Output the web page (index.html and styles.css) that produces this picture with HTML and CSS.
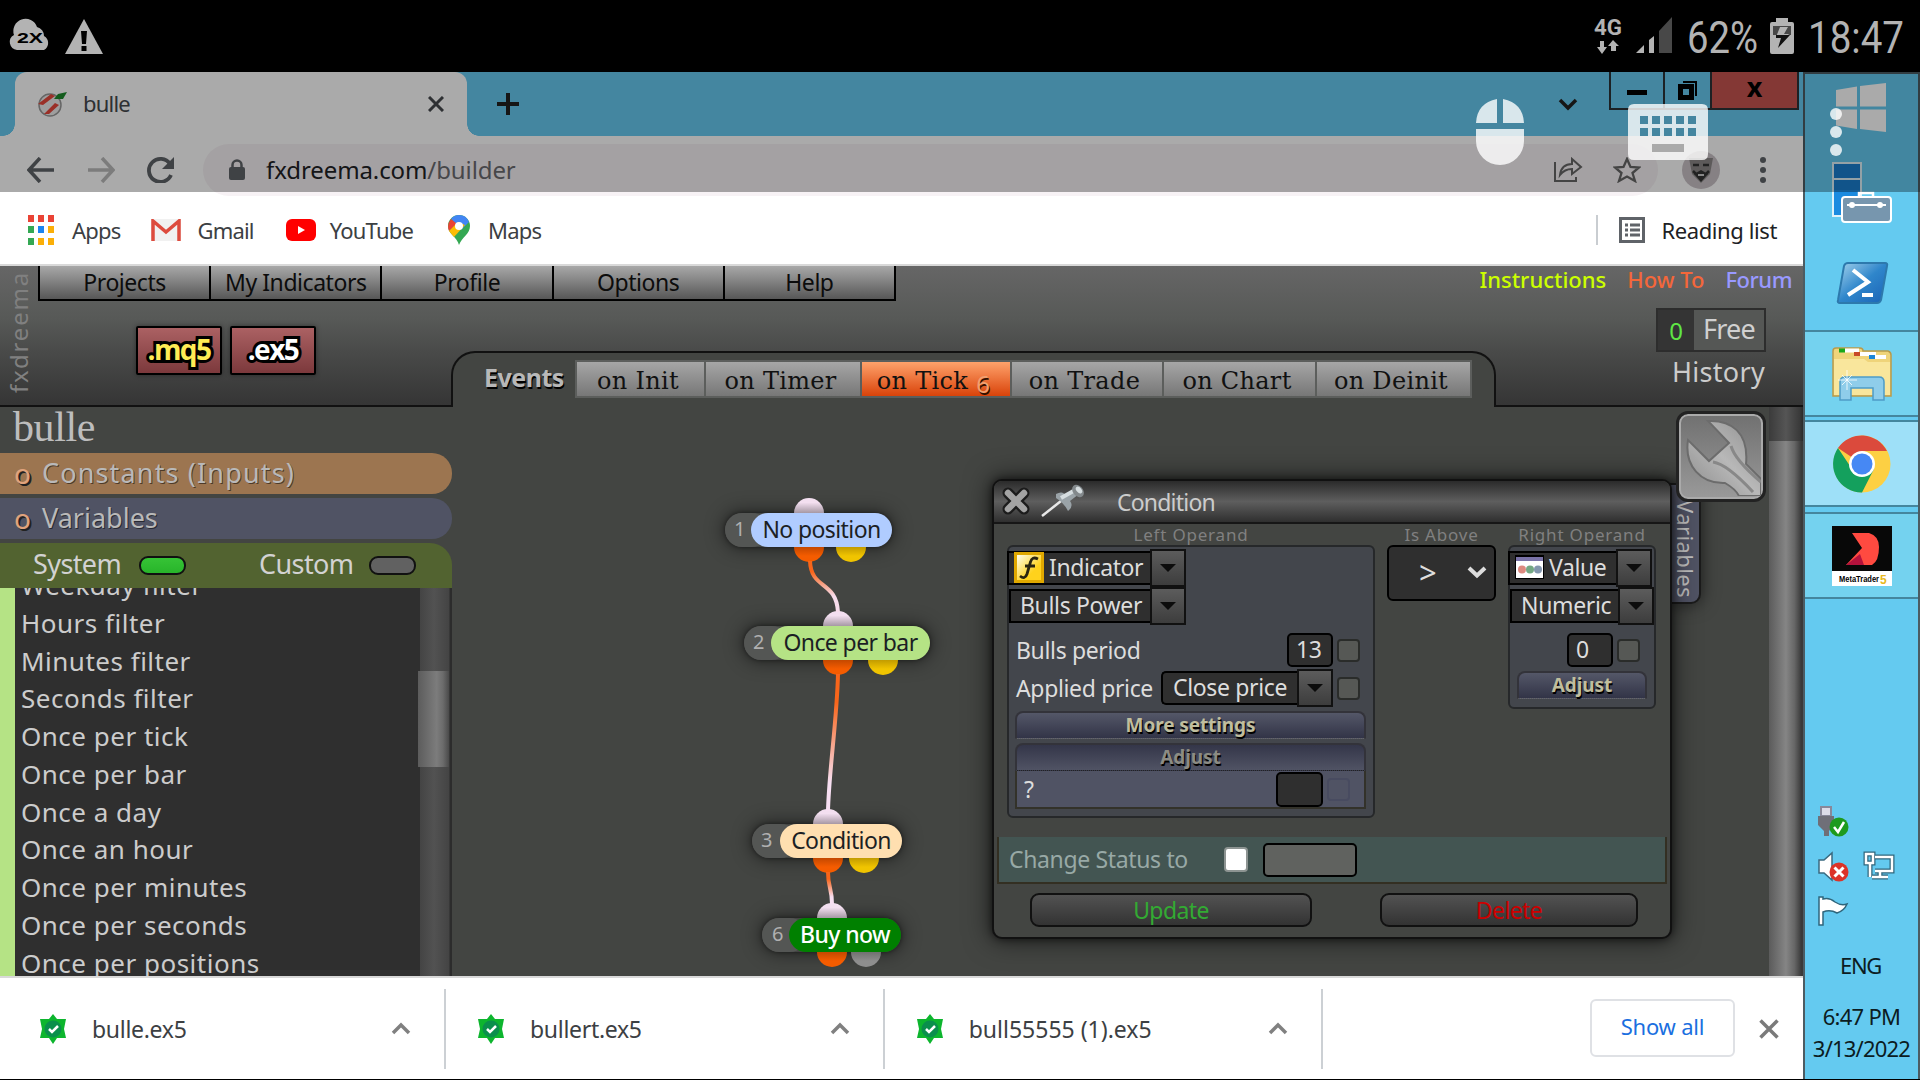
FILE: index.html
```html
<!DOCTYPE html>
<html lang="en">
<head>
    <meta charset="UTF-8">
    <meta name="viewport" content="width=device-width, initial-scale=1.0">
    <title>bulle</title>
    <link rel="stylesheet" href="styles.css">
</head>
<body>
    <!-- Phone status bar -->
    <div class="statusbar">
        <svg class="status-left" width="110" height="72" viewBox="0 0 110 72">
            <path d="M17 50 a8 8 0 0 1 -3 -15 a12 12 0 0 1 23 -8 a9 9 0 0 1 7 9 a8 8 0 0 1 0 14 z" fill="#b3b3b3"/>
            <text x="17" y="43" class="cloud-text" textLength="26" lengthAdjust="spacingAndGlyphs">2X</text>
            <path d="M84 19 L103 54 H65 z" fill="#b3b3b3"/>
            <path d="M81 31 h6 l-1 13 h-4 z M81.500 46 h5 v5 h-5 z" fill="#000"/>
        </svg>
        <svg class="status-right" width="340" height="72" viewBox="1580 0 340 72">
            <text x="1594" y="35" class="net-text" textLength="28" lengthAdjust="spacingAndGlyphs">4G</text>
            <path d="M1600 41 h4 v6 h3 l-5 7 l-5 -7 h3 z M1611 51 v-5 h-3 l5 -6 l6 6 h-3 v5 z" fill="#b3b3b3"/>
            <path d="M1636 53 l8 -8 v8 z M1649 53 v-13 l5 -4 v17 z" fill="#b3b3b3"/>
            <path d="M1659 53 V31 L1672 17 V53 z" fill="#484848"/>
            <text x="1687" y="53" class="big-text" textLength="71" lengthAdjust="spacingAndGlyphs">62%</text>
            <path d="M1772 22 h4 v-4 h12 v4 h4 q2 0 2 2 v28 q0 2 -2 2 h-20 q-2 0 -2 -2 v-28 q0 -2 2 -2 z" fill="#b3b3b3"/>
            <path d="M1773 26 h18 v9 h-18 z" fill="#484848"/>
            <path d="M1780 27 l-4 10 h5 l-4 10 l12 -13 h-5 l4 -7 z" fill="#b3b3b3"/>
            <path d="M1776 35 l0 3 h5 l-3 10 l12 -13 z" fill="#111"/>
            <text x="1808" y="53" class="big-text" textLength="96" lengthAdjust="spacingAndGlyphs">18:47</text>
        </svg>
    </div>

    <div class="remote">
        <div class="browser">
            <div class="tabstrip">
                <div class="tab">
                    <svg width="32" height="28" viewBox="0 0 32 28">
                        <circle cx="13" cy="15" r="11" fill="#eee" stroke="#999" stroke-width="1.500"/>
                        <path d="M1 14 L14 4 l4 2 L6 15 z M7 24 L18 13 l4 2 L12 24 z" fill="#e8483c"/>
                        <path d="M17 9 L21 4 L30 2 L26 9 z" fill="#1d8a2c"/>
                    </svg>
                    <span class="tab-title">bulle</span>
                    <svg width="16" height="16" viewBox="0 0 16 16"><path d="M1 1 L15 15 M15 1 L1 15" stroke="#45494d" stroke-width="3"/></svg>
                </div>
                <svg class="new-tab" width="24" height="24" viewBox="0 0 24 24"><path d="M12 1 V23 M1 12 H23" stroke="#222" stroke-width="4"/></svg>
                <svg class="tab-search" width="20" height="13" viewBox="0 0 20 13"><path d="M2 2 L10 10 L18 2" fill="none" stroke="#222" stroke-width="3.500"/></svg>
                <div class="window-buttons">
                    <span class="wb wb-min"><svg width="20" height="6"><rect width="20" height="5" fill="#000"/></svg></span>
                    <span class="wb wb-max"><svg width="20" height="19" viewBox="0 0 20 19"><path d="M2.500 5.500 h11 v11 h-11 z" fill="none" stroke="#000" stroke-width="5"/><path d="M5 1 H18 V15" fill="none" stroke="#000" stroke-width="2"/></svg></span>
                    <span class="wb wb-close">x</span>
                </div>
            </div>

            <div class="toolbar">
                <svg width="28" height="26" viewBox="0 0 28 26"><path d="M27 13 H3 M13 1 L2 13 L13 25" fill="none" stroke="#5f6368" stroke-width="3.500"/></svg>
                <svg width="28" height="26" viewBox="0 0 28 26"><path d="M1 13 H25 M15 1 L26 13 L15 25" fill="none" stroke="#bbb" stroke-width="3.500"/></svg>
                <svg width="28" height="26" viewBox="0 0 28 26"><path d="M24 18 A11.500 11.500 0 1 1 23 7" fill="none" stroke="#5f6368" stroke-width="3.800"/><path d="M27 0 V12 H15 z" fill="#5f6368"/></svg>
                <div class="url-pill">
                    <svg width="16" height="22" viewBox="0 0 16 22"><rect y="8" width="16" height="13" rx="2" fill="#5f6368"/><path d="M3.500 9 V6 a4.500 4.500 0 0 1 9 0 V9" fill="none" stroke="#5f6368" stroke-width="2.500"/></svg>
                    <span class="url">fxdreema.com<span class="path">/builder</span></span>
                    <svg class="share" width="30" height="26" viewBox="0 0 30 26"><path d="M2 5 V24 H23 V20" fill="none" stroke="#666" stroke-width="2"/><path d="M7 18 C8 10 12 7 19 7 V2 L28 10 L19 17 V12 C13 12 10 14 7 18 z" fill="none" stroke="#666" stroke-width="2"/></svg>
                    <svg width="28" height="26" viewBox="0 0 28 26"><path d="M14 2 L17.500 10 L26 10.500 L19.500 16 L22 24 L14 19.500 L6 24 L8.500 16 L2 10.500 L10.500 10 z" fill="none" stroke="#666" stroke-width="2.300"/></svg>
                </div>
                <svg class="avatar" width="40" height="40" viewBox="0 0 40 40">
                    <circle cx="20" cy="20" r="19" fill="#c9c2c7"/>
                    <path d="M8 8 H32 L29 24 L20 33 L11 24 z" fill="#8c8888"/>
                    <path d="M12 15 h6 M22 15 h6 M12 21 l3 3 M28 21 l-3 3" stroke="#333" stroke-width="2.500"/>
                    <path d="M13 24 L20 20 L27 24 L20 32 z" fill="#333"/>
                    <path d="M17 25 h6" stroke="#ccc" stroke-width="2"/>
                </svg>
                <svg class="kebab" width="8" height="26" viewBox="0 0 8 26"><g fill="#5f6368"><circle cx="4" cy="3" r="3"/><circle cx="4" cy="13" r="3"/><circle cx="4" cy="23" r="3"/></g></svg>
            </div>

            <div class="bookmarks">
                <a class="bookmark bm-apps">
                    <svg width="26" height="30" viewBox="0 0 26 30">
                        <path d="M0 0h6v7H0z M10 0h6v7h-6z M20 0h6v7h-6z" fill="#ea4335"/>
                        <path d="M0 11h6v7H0z M0 23h6v7H0z" fill="#34a853"/>
                        <path d="M10 11h6v7h-6z" fill="#1a84f0"/>
                        <path d="M20 11h6v7h-6z M10 23h6v7h-6z M20 23h6v7h-6z" fill="#fbaf08"/>
                    </svg>Apps</a>
                <a class="bookmark bm-gmail">
                    <svg width="30" height="22" viewBox="0 0 30 22"><rect width="30" height="22" fill="#f1f1f1"/><path d="M2 22 V2 L15 13 L28 2 V22" fill="none" stroke="#dd4b3e" stroke-width="3.500"/></svg>Gmail</a>
                <a class="bookmark bm-youtube">
                    <svg width="30" height="22" viewBox="0 0 30 22"><rect width="30" height="22" rx="6" fill="#f00"/><path d="M12 7 L19 11 L12 15 z" fill="#fff"/></svg>YouTube</a>
                <a class="bookmark bm-maps">
                    <svg width="22" height="30" viewBox="0 0 22 30">
                        <path d="M11 0 A11 11 0 0 1 22 11 C22 19 14 22 11 30 C9 22 0 19 0 11 A11 11 0 0 1 11 0 z" fill="#34a853"/>
                        <path d="M11 0 A11 11 0 0 1 21 7 L13 15 L3 4 A11 11 0 0 1 11 0 z" fill="#4285f4"/>
                        <path d="M3 4 L9 9 L1 16 A12 12 0 0 1 3 4 z" fill="#ea4335"/>
                        <path d="M1 16 L10 7 L17 10 L6 22 z" fill="#fbbc04"/>
                        <circle cx="11" cy="11" r="4" fill="#fff"/>
                    </svg>Maps</a>
                <span class="bm-divider"></span>
                <a class="bookmark bm-reading">
                    <svg width="26" height="26" viewBox="0 0 26 26"><rect x="1.500" y="1.500" width="23" height="23" fill="none" stroke="#5f6368" stroke-width="3"/><path d="M6 8 h3 M11 8 h10 M6 13 h3 M11 13 h10 M6 18 h3 M11 18 h10" stroke="#5f6368" stroke-width="3"/></svg>Reading list</a>
            </div>

            <!-- fxDreema builder -->
            <div class="app">
                <header class="app-header">
                    <div class="brand"><span>fxdreema</span></div>
                    <nav class="menu">
                        <a>Projects</a><a>My Indicators</a><a>Profile</a><a>Options</a><a>Help</a>
                    </nav>
                    <div class="compile">
                        <button class="compile-btn mq">.mq5</button>
                        <button class="compile-btn">.ex5</button>
                    </div>
                    <div class="events">
                        <span class="events-title">Events</span>
                        <div class="event-tabs">
                            <span class="ev ev-init">on Init</span>
                            <span class="ev ev-timer">on Timer</span>
                            <span class="ev ev-tick">on Tick<b class="count">6</b></span>
                            <span class="ev ev-trade">on Trade</span>
                            <span class="ev ev-chart">on Chart</span>
                            <span class="ev ev-deinit">on Deinit</span>
                        </div>
                    </div>
                    <div class="account">
                        <div class="links"><a class="l-inst">Instructions</a><a class="l-how">How To</a><a class="l-forum">Forum</a></div>
                        <div class="plan"><span class="plan-num">0</span><span class="plan-name">Free</span></div>
                        <div class="history">History</div>
                    </div>
                </header>

                <div class="app-body">
                    <aside class="sidebar">
                        <div class="project">bulle</div>
                        <div class="bar bar-const"><b>o</b><span>Constants (Inputs)</span></div>
                        <div class="bar bar-vars"><b>o</b><span>Variables</span></div>
                        <div class="switches">
                            <span class="sw-label">System</span><i class="switch on"></i>
                            <span class="sw-label sw-custom">Custom</span><i class="switch"></i>
                        </div>
                        <div class="list">
                            <ul>
                                <li>Weekday filter</li>
                                <li>Hours filter</li>
                                <li>Minutes filter</li>
                                <li>Seconds filter</li>
                                <li>Once per tick</li>
                                <li>Once per bar</li>
                                <li>Once a day</li>
                                <li>Once an hour</li>
                                <li>Once per minutes</li>
                                <li>Once per seconds</li>
                                <li>Once per positions</li>
                            </ul>
                            <div class="list-scroll"><div class="list-thumb"></div></div>
                        </div>
                    </aside>

                    <main class="canvas">
                        <div class="node node-1"><i class="nub in"></i><i class="nub out"></i><i class="nub out2"></i><span class="num">1</span><span class="name">No position</span></div>
                        <div class="node node-2"><i class="nub in"></i><i class="nub out"></i><i class="nub out2"></i><span class="num">2</span><span class="name">Once per bar</span></div>
                        <div class="node node-3"><i class="nub in"></i><i class="nub out"></i><i class="nub out2"></i><span class="num">3</span><span class="name">Condition</span></div>
                        <div class="node node-6"><i class="nub in"></i><i class="nub out"></i><i class="nub out2"></i><span class="num">6</span><span class="name">Buy now</span></div>
                        <svg class="wires" width="541" height="569" viewBox="452 407 541 569">
                            <defs>
                                <linearGradient id="w1" gradientUnits="userSpaceOnUse" x1="0" y1="562" x2="0" y2="611"><stop offset=".2" stop-color="#f8651a"/><stop offset=".7" stop-color="#f7dcec"/></linearGradient>
                                <linearGradient id="w2" gradientUnits="userSpaceOnUse" x1="0" y1="675" x2="0" y2="810"><stop offset=".2" stop-color="#f8651a"/><stop offset=".8" stop-color="#f7dff2"/></linearGradient>
                                <linearGradient id="w3" gradientUnits="userSpaceOnUse" x1="0" y1="873" x2="0" y2="903"><stop offset=".2" stop-color="#f8651a"/><stop offset=".8" stop-color="#f7dff2"/></linearGradient>
                            </defs>
                            <g fill="none" stroke-width="4">
                                <path d="M810 561 C811 590 836 580 838 612" stroke="url(#w1)"/>
                                <path d="M838 674 C837 720 829 770 828 811" stroke="url(#w2)"/>
                                <path d="M828 872 C828 888 832 888 832 904" stroke="url(#w3)"/>
                            </g>
                        </svg>

                        <div class="side-tab"><span>Variables</span></div>

                        <section class="dialog">
                            <div class="titlebar">
                                <svg width="30" height="30" viewBox="0 0 30 30"><path d="M7 7 L23 23 M23 7 L7 23" stroke="#1c1c1c" stroke-width="11" stroke-linecap="round"/><path d="M7 7 L23 23 M23 7 L7 23" stroke="#a3a3a3" stroke-width="6.500" stroke-linecap="round"/></svg>
                                <svg class="pin" width="44" height="34" viewBox="0 0 44 34">
                                    <path d="M1 32 L20 17" stroke="#e8e8e8" stroke-width="2.500"/>
                                    <path d="M15 10 Q22 6 25 12 L34 6 L38 10 L29 17 Q33 22 27 27 Q23 19 15 14 z" fill="#9aa3a8"/>
                                    <path d="M20 14 L36 5" stroke="#d6dde0" stroke-width="4"/>
                                    <ellipse cx="37" cy="7" rx="5" ry="7" transform="rotate(-40 37 7)" fill="#83898c"/>
                                    <ellipse cx="38" cy="6" rx="2.500" ry="4" transform="rotate(-40 38 6)" fill="#d6dde0"/>
                                </svg>
                                <span>Condition</span>
                            </div>
                            <div class="operands">
                                <h4>Left Operand</h4><h4>Is Above</h4><h4>Right Operand</h4>
                                <div class="panel left">
                                    <div class="pick">
                                        <span class="value with-icon"><svg width="30" height="31" viewBox="0 0 30 31"><defs><linearGradient id="fy" x1="0" y1="0" x2="1" y2="1"><stop offset=".1" stop-color="#fffbe0"/><stop offset=".65" stop-color="#ffd21c"/></linearGradient></defs><rect x="1.500" y="1.500" width="27" height="28" fill="url(#fy)" stroke="#e0a800" stroke-width="3"/><path d="M24 7 Q18 4 16.500 10 L13 22 Q11 28 6 24 M11 14 H21" fill="none" stroke="#2a2410" stroke-width="2.800"/></svg>Indicator</span><i class="arrow"></i>
                                    </div>
                                    <div class="pick second"><span class="value">Bulls Power</span><i class="arrow"></i></div>
                                    <div class="field first"><label>Bulls period</label><span class="input">13</span><i class="check"></i></div>
                                    <div class="field"><label>Applied price</label><span class="input price">Close price</span><i class="arrow"></i><i class="check"></i></div>
                                    <div class="strip more">More settings</div>
                                    <div class="strip adjust-open">Adjust</div>
                                    <div class="adjust-body"><label>?</label><span class="input"></span><i class="check faint"></i></div>
                                </div>
                                <div class="operator"><span>&gt;</span><svg width="20" height="13" viewBox="0 0 20 13"><path d="M2 2 L10 9.500 L18 2" fill="none" stroke="#ddd" stroke-width="4"/></svg></div>
                                <div class="panel right">
                                    <div class="pick">
                                        <span class="value with-icon"><svg width="29" height="24" viewBox="0 0 29 24"><rect width="29" height="24" fill="#000"/><rect x="1" y="2" width="27" height="21" fill="#fff"/><rect x="1" y="2" width="27" height="4" fill="#7a73a8"/><circle cx="7" cy="14.500" r="4" fill="#dd8a80"/><circle cx="15" cy="14.500" r="4" fill="#74a884"/><circle cx="23" cy="14.500" r="4" fill="#8397ae"/></svg>Value</span><i class="arrow"></i>
                                    </div>
                                    <div class="pick second"><span class="value">Numeric</span><i class="arrow"></i></div>
                                    <div class="field first"><label></label><span class="input">0</span><i class="check"></i></div>
                                    <div class="strip">Adjust</div>
                                </div>
                            </div>
                            <div class="change-status"><label>Change Status to</label><i class="white-check"></i><i class="status-input"></i></div>
                            <div class="actions"><button class="update">Update</button><button class="delete">Delete</button></div>
                        </section>

                        <div class="wrench">
                            <svg width="82" height="82" viewBox="0 0 82 82">
                                <defs><linearGradient id="steel" x1="0" y1="1" x2="1" y2="0"><stop offset="0" stop-color="#8a8a8a"/><stop offset=".5" stop-color="#b8b8b8"/><stop offset="1" stop-color="#8e8e8e"/></linearGradient></defs>
                                <path d="M29 7 C52 6 70 18 67 50 L82 65 V82 H60 C57 76 53 73 46 69 C22 70 5 52 9 26 L30 47 L50 29 z" fill="url(#steel)" stroke="#6c6c6c" stroke-width="2"/>
                                <path d="M34 48 Q48 50 74 78 M52 32 Q56 46 82 68" fill="none" stroke="#888" stroke-width="3"/>
                            </svg>
                        </div>
                        <div class="page-scroll"><div class="page-thumb"></div></div>
                    </main>
                </div>
            </div>

            <div class="downloads">
                <div class="download">
                    <svg width="28" height="30" viewBox="0 0 28 30"><path d="M14 0 L18 5 H27 L25 15 L27 24 H18 L14 30 L10 24 H1 L3 15 L1 5 H10 z" fill="#0db52e"/><circle cx="14" cy="15" r="8.500" fill="#0a8f4c"/><path d="M10 15 L13 18 L19 12" fill="none" stroke="#fff" stroke-width="2.500"/></svg>
                    <span>bulle.ex5</span>
                    <svg width="20" height="13" viewBox="0 0 20 13"><path d="M2 11 L10 3 L18 11" fill="none" stroke="#808080" stroke-width="3.500"/></svg>
                </div>
                <div class="download">
                    <svg width="28" height="30" viewBox="0 0 28 30"><path d="M14 0 L18 5 H27 L25 15 L27 24 H18 L14 30 L10 24 H1 L3 15 L1 5 H10 z" fill="#0db52e"/><circle cx="14" cy="15" r="8.500" fill="#0a8f4c"/><path d="M10 15 L13 18 L19 12" fill="none" stroke="#fff" stroke-width="2.500"/></svg>
                    <span>bullert.ex5</span>
                    <svg width="20" height="13" viewBox="0 0 20 13"><path d="M2 11 L10 3 L18 11" fill="none" stroke="#808080" stroke-width="3.500"/></svg>
                </div>
                <div class="download dl-long">
                    <svg width="28" height="30" viewBox="0 0 28 30"><path d="M14 0 L18 5 H27 L25 15 L27 24 H18 L14 30 L10 24 H1 L3 15 L1 5 H10 z" fill="#0db52e"/><circle cx="14" cy="15" r="8.500" fill="#0a8f4c"/><path d="M10 15 L13 18 L19 12" fill="none" stroke="#fff" stroke-width="2.500"/></svg>
                    <span>bull55555 (1).ex5</span>
                    <svg width="20" height="13" viewBox="0 0 20 13"><path d="M2 11 L10 3 L18 11" fill="none" stroke="#808080" stroke-width="3.500"/></svg>
                </div>
                <button class="show-all">Show all</button>
                <svg class="close-shelf" width="20" height="20" viewBox="0 0 20 20"><path d="M1.500 1.500 L18.500 18.500 M18.500 1.500 L1.500 18.500" stroke="#7a7a7a" stroke-width="3.500"/></svg>
            </div>
        </div>

        <!-- Windows taskbar -->
        <div class="taskbar">
            <div class="cell start">
                <svg width="52" height="52" viewBox="0 0 52 52"><path d="M1 8 L22 4.500 V24.500 H1 z M25 4 L51 1 V24.500 H25 z M1 27.500 H22 V47 L1 43.500 z M25 27.500 H51 V50 L25 47 z" fill="#fff"/></svg>
            </div>
            <div class="cell server">
                <svg width="60" height="62" viewBox="0 0 60 62">
                    <rect x="1" y="1" width="28" height="53" fill="#1b8be0" stroke="#dff2fa" stroke-width="2"/>
                    <path d="M2 2 H28 V28 H2 z" fill="#1a7fd0"/><path d="M1 17 H29" stroke="#dff2fa" stroke-width="2"/>
                    <path d="M27 35 V31 h14 V35" fill="none" stroke="#fff" stroke-width="2.500"/>
                    <rect x="10" y="35" width="49" height="25" rx="3" fill="#7796ae" stroke="#fff" stroke-width="2"/>
                    <path d="M15 43 H54" stroke="#fff" stroke-width="2"/><circle cx="20" cy="43" r="3" fill="#fff"/><circle cx="48" cy="43" r="3" fill="#fff"/>
                </svg>
            </div>
            <div class="cell shell">
                <svg width="54" height="44" viewBox="0 0 54 44">
                    <defs><linearGradient id="ps" x1="0" y1="0" x2="1" y2="1"><stop offset="0" stop-color="#a5d3ec"/><stop offset=".5" stop-color="#2f86cb"/><stop offset="1" stop-color="#1b62b5"/></linearGradient></defs>
                    <path d="M13 2 H50 Q53 2 52 5 L46 39 Q45 42 42 42 H5 Q2 42 3 39 L9 5 Q10 2 13 2 z" fill="url(#ps)" stroke="#2d79ad" stroke-width="2"/>
                    <path d="M18 9 L33 21 L13 34 M27 34 H38" fill="none" stroke="#fff" stroke-width="4"/>
                </svg>
            </div>
            <div class="cell active explorer">
                <svg width="60" height="56" viewBox="0 0 60 56">
                    <path d="M1 5 Q1 2 4 2 H28 Q31 2 31 5 H56 Q59 6 59 9 V50 H1 z" fill="#efd47a" stroke="#b99b4b" stroke-width="1.500"/>
                    <path d="M7 2.500h6v4H7z" fill="#1aa81a"/><path d="M13 2.500h14v4H13z" fill="#fff"/>
                    <path d="M22 6h6v4h-6z" fill="#c84a28"/><path d="M28 6h16v4H28z" fill="#fff"/>
                    <path d="M37 9h6v4h-6z" fill="#1a86d8"/><path d="M43 9h11v4H43z" fill="#fff"/>
                    <path d="M2 13 H32 L36 16 H58 V49 H2 z" fill="#f9e69c"/>
                    <path d="M8 54 V36 Q8 31 13 31 H47 Q52 31 52 36 V54 H41 V42 H19 V54 z" fill="#8fcdea" stroke="#4d9cc7" stroke-width="1.500"/>
                    <path d="M15 24 V44 M6 34 H25 M10 29 L20 39 M20 29 L10 39" stroke="#fff" stroke-opacity=".8"/>
                </svg>
            </div>
            <div class="cell active current chrome">
                <svg width="58" height="58" viewBox="0 0 58 58">
                    <circle cx="29" cy="29" r="28.500" fill="#fdd043"/>
                    <path d="M29 29 L5 13 A28.500 28.500 0 0 1 54 16 H29 z" fill="#db4a3c"/>
                    <path d="M5 13 A28.500 28.500 0 0 0 29 57.500 L41 34 L29 29 L19 34 z" fill="#14a05d"/>
                    <circle cx="29" cy="29" r="13" fill="#fff"/><circle cx="29" cy="29" r="10.500" fill="#4688f4"/>
                </svg>
            </div>
            <div class="cell active meta">
                <svg width="60" height="60" viewBox="0 0 60 60">
                    <rect width="60" height="45" fill="#080808"/><rect y="45" width="60" height="15" fill="#fff"/>
                    <path d="M20 7 H37 Q47 10 47 21 Q47 35 40 39 H14 L30 22 z" fill="#ff4a40"/><path d="M14 39 L28 28 L32 39 z" fill="#b3123c"/>
                    <text x="7" y="56" class="mt-text" textLength="40" lengthAdjust="spacingAndGlyphs">MetaTrader</text><text x="48" y="58" class="mt-five">5</text>
                </svg>
            </div>
            <div class="tray">
                <svg width="80" height="122" viewBox="1816 805 80 122">
                    <path d="M1821 808 h10 v9 h-10 z" fill="#dcdce8" stroke="#88889a" stroke-width="2"/><path d="M1818 817 h16 v9 l-5 6 v5 h-5 v-5 l-6 -6 z" fill="#6f6f78"/>
                    <circle cx="1839" cy="828" r="9.500" fill="#1e9a1e"/><path d="M1834 828 l4 5 l6 -10" fill="none" stroke="#fff" stroke-width="2.500"/>
                    <path d="M1819 861 h5 l8 -7 v27 l-8 -7 h-5 z" fill="#fff" stroke="#3a6a80" stroke-width="1.500"/>
                    <circle cx="1839" cy="873" r="9.500" fill="#dc3328"/><path d="M1834.500 868.500 l9 9 M1843.500 868.500 l-9 9" stroke="#fff" stroke-width="3"/>
                    <g fill="none" stroke="#2f667c" stroke-width="5"><path d="M1875 858 h17 v14 h-17 M1880 872 v5 M1872 878 h16 M1866 855 h7 v9 h-7 z M1870 864 v14"/></g>
                    <g fill="none" stroke="#fff" stroke-width="2.500"><path d="M1875 858 h17 v14 h-17 M1880 872 v5 M1872 878 h16 M1866 855 h7 v9 h-7 z M1870 864 v14"/></g>
                    <path d="M1819 898 h4 v2 q6 -2 12 3 q6 4 12 2 q-3 7 -10 9 q-7 -4 -14 -1 v13 h-4 z" fill="#fff" stroke="#2f667c" stroke-width="1.500"/>
                </svg>
                <span class="lang">ENG</span>
                <span class="time">6:47 PM</span>
                <span class="date">3/13/2022</span>
            </div>
        </div>
        <div class="shade"></div>
    </div>

    <!-- Remote control overlay -->
    <svg class="remote-controls" width="440" height="80" viewBox="1470 95 440 80">
        <g fill="#fff" fill-opacity=".8">
            <path d="M1497 99 V123 H1476 Q1477 103 1497 99 z M1503 99 V123 H1524 Q1523 103 1503 99 z M1476 129 H1524 V141 A24 24 0 0 1 1476 141 z"/>
            <path fill-rule="evenodd" d="M1634 104 H1702 Q1708 104 1708 110 V154 Q1708 160 1702 160 H1634 Q1628 160 1628 154 V110 Q1628 104 1634 104 z M1640 116v8h8v-8z M1652 116v8h8v-8z M1664 116v8h8v-8z M1676 116v8h8v-8z M1688 116v8h8v-8z M1640 128v8h8v-8z M1652 128v8h8v-8z M1664 128v8h8v-8z M1676 128v8h8v-8z M1688 128v8h8v-8z M1652 144v8h32v-8z"/>
            <circle cx="1836" cy="114" r="6"/><circle cx="1836" cy="132" r="6"/><circle cx="1836" cy="150" r="6"/>
        </g>
    </svg>
</body>
</html>
```
FILE: styles.css
```css
* {
    box-sizing: border-box;
}

body {
    margin: 0;
    width: 1920px;
    height: 1080px;
    overflow: hidden;
    background: #000;
    font-family: "Noto Sans", "Open Sans", sans-serif;
    position: relative;
}

svg {
    display: block;
    flex: none;
}

i, h4, b {
    font-style: normal;
    font-weight: normal;
}

button {
    font-family: inherit;
    padding: 0;
}

/* ---------- phone status bar ---------- */
.statusbar {
    height: 72px;
    display: flex;
    justify-content: space-between;
}

.cloud-text {
    font: bold 15px "Liberation Sans", sans-serif;
}

.net-text {
    font: bold 22px Roboto, sans-serif;
    fill: #b3b3b3;
}

.big-text {
    font: 44px Roboto, sans-serif;
    fill: #b3b3b3;
}

.remote {
    display: flex;
    height: 1007px;
    position: relative;
}

/* dimmed band under the overlay buttons */
.shade {
    position: absolute;
    top: 0;
    left: 0;
    right: 0;
    height: 120px;
    background: rgba(0, 0, 0, 0.333);
    z-index: 2;
}

.remote-controls {
    position: absolute;
    left: 1470px;
    top: 95px;
    z-index: 3;
}

/* ---------- browser ---------- */
.browser {
    width: 1803px;
    display: flex;
    flex-direction: column;
}

.tabstrip {
    height: 64px;
    background: #66caf0;
    display: flex;
    padding-left: 15px;
}

.tab {
    width: 452px;
    height: 64px;
    background: #fff;
    border-radius: 12px 12px 0 0;
    display: flex;
    align-items: center;
    padding: 0 23px 0 22px;
    position: relative;
}

.tab::before,
.tab::after {
    content: "";
    position: absolute;
    bottom: 0;
    width: 12px;
    height: 12px;
}

.tab::before {
    left: -12px;
    background: radial-gradient(circle at 0 0, transparent 11.5px, #fff 12px);
}

.tab::after {
    right: -12px;
    background: radial-gradient(circle at 100% 0, transparent 11.5px, #fff 12px);
}

.tab-title {
    font-size: 22px;
    letter-spacing: -0.8px;
    color: #45494d;
    margin-left: 14px;
    flex: 1;
    padding-bottom: 3px;
}

.new-tab {
    margin: 20px 0 0 29px;
}

.tab-search {
    margin: 26px 31px 0 auto;
}

.window-buttons {
    display: flex;
    height: 38px;
    width: 190px;
    margin-right: 4px;
    border: 2px solid #2b3236;
    border-top: 0;
}

.wb {
    display: flex;
    align-items: center;
    justify-content: center;
}

.wb-min {
    width: 52px;
    padding-top: 6px;
}

.wb-max {
    width: 49px;
    border-left: 2px solid #2b3236;
    border-right: 2px solid #2b3236;
}

.wb-close {
    flex: 1;
    background: #c75550;
    font-weight: bold;
    font-size: 27px;
    padding-bottom: 7px;
}

.toolbar {
    height: 56px;
    background: #fff;
    display: flex;
    align-items: center;
    gap: 32px;
    padding: 12px 0 0 27px;
    position: relative;
    z-index: 1;
}

.url-pill {
    width: 1455px;
    height: 52px;
    margin-left: -4px;
    margin-right: -12px;
    border-radius: 26px;
    background: #f7f2f5;
    display: flex;
    align-items: center;
    padding: 0 17px 0 26px;
    flex: none;
}

.url {
    font-size: 24px;
    letter-spacing: -0.1px;
    margin-left: 21px;
    flex: 1;
    color: #202124;
    padding-bottom: 1px;
}

.path {
    color: #6b6b70;
}

.share {
    margin-right: 30px;
}

.toolbar .avatar {
    margin-left: 3px;
}

.toolbar .kebab {
    margin-left: 6px;
}

.bookmarks {
    height: 74px;
    background: #fff;
    border-bottom: 2px solid #d9d9d9;
    display: flex;
    align-items: center;
    padding: 3px 26px 0 28px;
}

.bookmark {
    display: flex;
    align-items: center;
    gap: 18px;
    font-size: 22px;
    letter-spacing: -0.8px;
    color: #3c4043;
}

.bm-gmail {
    margin-left: 31px;
    gap: 16px;
}

.bm-youtube {
    margin-left: 32px;
    gap: 14px;
}

.bm-maps {
    margin-left: 35px;
}

.bm-divider {
    width: 2px;
    height: 30px;
    background: #c9cdd1;
    margin-left: auto;
}

.bm-reading {
    margin-left: 21px;
    gap: 16px;
    letter-spacing: -0.4px;
    color: #202124;
}

/* ---------- fxDreema ---------- */
.app {
    height: 710px;
    background: #434542;
}

.app-header {
    height: 141px;
    display: grid;
    grid-template-columns: 38px 413px 1045px 307px;
    grid-template-rows: 35px 104px;
    background: linear-gradient(#666 0, #575957 38%, #494a49 62%, #353535 100%);
    border-bottom: 2px solid #111;
}

.brand {
    grid-row: 1 / 3;
    display: flex;
    align-items: flex-start;
    justify-content: center;
    padding-top: 5px;
}

.brand span {
    writing-mode: vertical-rl;
    transform: rotate(180deg);
    font-size: 24px;
    line-height: 38px;
    letter-spacing: 1.8px;
    color: #808080;
}

.menu {
    grid-column: 2 / 4;
    width: 858px;
    display: flex;
    border-left: 2px solid #000;
    border-bottom: 2px solid #000;
}

.menu a {
    flex: 1;
    border-right: 2px solid #000;
    background: linear-gradient(#a8a8a8, #575757);
    color: #0c0c0c;
    font-size: 23px;
    letter-spacing: -0.45px;
    line-height: 33px;
    text-align: center;
}

.compile {
    grid-column: 2;
    display: flex;
    gap: 8px;
    padding: 25px 0 0 98px;
}

.compile-btn {
    width: 86px;
    height: 49px;
    border: 2px solid #000;
    border-radius: 2px;
    background: linear-gradient(#ab6163, #7c393c);
    box-shadow: 0 0 5px rgba(0, 0, 0, 0.4);
    color: #fff;
    font-family: "Open Sans", sans-serif;
    font-weight: bold;
    font-size: 28px;
    letter-spacing: -1.5px;
    line-height: 38px;
    padding-bottom: 3px;
    -webkit-text-stroke: 6px #000;
    paint-order: stroke fill;
}

.mq {
    color: #ffec55;
}

.events {
    grid-column: 3;
    height: 56px;
    align-self: end;
    margin-bottom: -2px;
    border: 2px solid #111;
    border-bottom: 0;
    border-radius: 24px 24px 0 0;
    background: #434542;
    display: flex;
    padding: 7px 0 0 31px;
}

.events-title {
    font-weight: bold;
    font-size: 25px;
    letter-spacing: -0.5px;
    line-height: 34px;
    width: 91px;
    color: #b8b8b8;
    text-shadow: 1px 2px 0 #000;
}

.event-tabs {
    display: flex;
    gap: 2px;
    height: 38px;
    padding: 2px;
    background: #5c5e5c;
}

.ev {
    font-family: "DejaVu Serif", serif;
    font-size: 24px;
    letter-spacing: 0.3px;
    line-height: 39px;
    height: 34px;
    padding-right: 5px;
    text-align: center;
    background: linear-gradient(#a6a6a6, #777);
    color: #111;
}

.ev-init { width: 127px; }
.ev-timer { width: 154px; }
.ev-trade { width: 150px; }
.ev-chart { width: 151px; }
.ev-deinit { width: 153px; }

.ev-tick {
    width: 148px;
    background: linear-gradient(#ffa26b, #d9430a);
}

.count {
    font-family: "Noto Sans", sans-serif;
    font-size: 24px;
    line-height: 20px;
    color: #f0a070;
    text-shadow: 1px 2px 0 #301000;
    margin-left: 8px;
    position: relative;
    top: 4px;
}

.account {
    grid-column: 4;
    grid-row: 1 / 3;
    display: flex;
    flex-direction: column;
    align-items: flex-end;
}

.links {
    display: flex;
    gap: 21px;
    padding-right: 11px;
    font-size: 22px;
    line-height: 26px;
    font-weight: 500;
    white-space: nowrap;
}

.l-inst { color: #cf0; }
.l-how { color: #f4673a; }
.l-forum { color: #99f; letter-spacing: -0.5px; }

.plan {
    width: 110px;
    height: 44px;
    margin: 16px 37px 0 0;
    border: 2px solid #2d2d2d;
    display: flex;
    font-size: 27px;
    line-height: 38px;
    background: #555755;
}

.plan-num {
    width: 36px;
    background: #343434;
    color: #5fe645;
    font-size: 24px;
    line-height: 42px;
    text-align: center;
}

.plan-name {
    flex: 1;
    text-align: center;
    letter-spacing: -0.8px;
    color: #d0d0d0;
}

.history {
    font-size: 27px;
    line-height: 40px;
    margin-right: 38px;
    letter-spacing: 0.3px;
    color: #ccc;
}

.app-body {
    display: flex;
    height: 569px;
}

.sidebar {
    width: 452px;
    display: flex;
    flex-direction: column;
    gap: 4px;
}

.project {
    font: 42px "Liberation Serif", serif;
    letter-spacing: -0.4px;
    line-height: 40px;
    height: 42px;
    padding-left: 13px;
    color: #bdbdbd;
}

.bar {
    height: 41px;
    border-radius: 0 20px 20px 0;
    display: flex;
    align-items: center;
    padding: 0 0 2px 14px;
    font-size: 27px;
    color: #b9b9b9;
    text-shadow: 1px 1px 0 rgba(0, 0, 0, 0.5);
}

.bar b {
    width: 28px;
    color: #e0a37c;
    font-size: 28px;
    text-shadow: 2px 2px 0 #222;
}

.bar-const {
    background: #9c7550;
}

.bar-const span {
    letter-spacing: 1.15px;
}

.bar-vars {
    background: #505364;
}

.switches {
    height: 45px;
    background: #526330;
    border-radius: 0 22px 0 0;
    display: flex;
    align-items: center;
    padding: 0 0 4px 33px;
}

.sw-label {
    font-size: 27px;
    letter-spacing: -0.6px;
    width: 106px;
    padding-bottom: 1px;
    color: #d2d2d2;
}

.sw-custom {
    margin-left: 73px;
    width: 110px;
}

.switch {
    width: 47px;
    height: 19px;
    border: 2px solid #111;
    border-radius: 9px;
    background: #616161;
    margin-top: 3px;
}

.switch.on {
    background: linear-gradient(#36c336, #28b52a);
}

.list {
    height: 388px;
    margin-top: -4px;
    overflow: hidden;
    display: flex;
    background: #2f2f2f;
    border-left: 15px solid #b5e385;
}

.list ul {
    list-style: none;
    margin: -21px 0 0;
    padding: 0 0 0 6px;
    width: 403px;
}

.list li {
    font-size: 26px;
    letter-spacing: 0.5px;
    line-height: 37.75px;
    color: #ccc;
    white-space: nowrap;
}

.list-scroll {
    width: 34px;
    padding-top: 83px;
    background: linear-gradient(90deg, #2f2f2f 2px, #444 2px, #525252 16px, #444 31px, #2c2c2c 32px);
}

.list-thumb {
    width: 31px;
    height: 96px;
    background: linear-gradient(90deg, #5c5c5c, #7c7c7c 60%, #6c6c6c 80%, #4a4a4a);
}

/* ---------- block canvas ---------- */
.canvas {
    flex: 1;
    position: relative;
    overflow: hidden;
}

.node {
    position: absolute;
    height: 34px;
    display: flex;
    border-radius: 17px;
    box-shadow: 0 0 18px 3px rgba(0, 0, 0, 0.4), 0 0 5px rgba(0, 0, 0, 0.5);
}

.node-1 { left: 273px; top: 106px; }
.node-2 { left: 292px; top: 219px; }
.node-3 { left: 300px; top: 417px; }
.node-6 { left: 310px; top: 511px; }

.num {
    width: 44px;
    padding-left: 9px;
    border-radius: 17px;
    background: #545654;
    color: #b0b0b0;
    font-size: 20px;
    line-height: 32px;
}

.name {
    margin-left: -18px;
    border-radius: 17px;
    font-size: 23px;
    letter-spacing: -0.6px;
    line-height: 32px;
    color: #1c1f24;
    text-align: center;
    position: relative;
}

.node-1 .name { width: 141px; background: #b0ccff; }
.node-2 .num { width: 45px; }
.node-2 .name { width: 159px; background: #b5e385; }
.node-3 .num { width: 46px; }
.node-3 .name { width: 122px; background: #ffdfb0; }
.node-6 .num { width: 45px; padding-left: 10px; }
.node-6 .name { width: 112px; background: #008000; color: #fff; font-weight: 500; }

.nub {
    position: absolute;
    width: 30px;
    height: 15px;
}

.in {
    top: -15px;
    border-radius: 15px 15px 0 0;
    background: linear-gradient(#f3dff0 30%, #a698a4);
}

.out,
.out2 {
    top: 34px;
    border-radius: 0 0 15px 15px;
}

.out { background: linear-gradient(#c44800, #f55c00 60%); }
.out2 { background: linear-gradient(#c29b00, #f0c400 60%); }
.node-6 .out2 { background: linear-gradient(#707070, #8e8e8e 60%); }

.node-1 .in, .node-1 .out { left: 69px; }
.node-1 .out2 { left: 111px; }
.node-2 .in, .node-2 .out { left: 79px; }
.node-2 .out2 { left: 124px; }
.node-3 .in, .node-3 .out { left: 61px; }
.node-3 .out2 { left: 97px; }
.node-6 .in, .node-6 .out { left: 55px; }
.node-6 .out2 { left: 89px; }

.wires {
    position: absolute;
    left: 0;
    top: 0;
}

/* ---------- condition window ---------- */
.dialog {
    position: absolute;
    left: 540px;
    top: 72px;
    width: 680px;
    height: 460px;
    background: #434542;
    border: 2px solid #111;
    border-radius: 10px;
    box-shadow: 0 0 26px 2px rgba(0, 0, 0, 0.55), 0 0 8px rgba(0, 0, 0, 0.6);
    font-size: 23px;
    letter-spacing: -0.35px;
    color: #ddd;
}

.titlebar {
    height: 43px;
    border-bottom: 2px solid #161616;
    border-radius: 8px 8px 0 0;
    background: linear-gradient(#2b2b2b, #5e5e5e 50%, #2f2f2f);
    display: flex;
    align-items: center;
    padding: 0 0 1px 7px;
    color: #ccc;
}

.titlebar span {
    letter-spacing: -0.8px;
    padding-top: 2px;
}

.pin {
    margin: 0 32px 0 10px;
}

.operands {
    display: grid;
    grid-template-columns: 368px 109px 148px;
    grid-template-rows: 21px 273px;
    column-gap: 12px;
    align-items: start;
    padding-left: 13px;
}

.operands h4 {
    margin: 0;
    font-size: 17px;
    letter-spacing: 0.8px;
    line-height: 21px;
    text-align: center;
    color: #808080;
    white-space: nowrap;
}

.panel {
    border: 2px solid #26282a;
    border-radius: 6px;
    background: #43464c;
    height: 100%;
    padding: 2px 0 0;
}

.panel.right {
    height: 164px;
}

.pick {
    display: flex;
    align-items: center;
    margin-left: -2px;
    height: 38px;
}

.pick.second {
    margin-left: 0;
    height: 37px;
}

.value {
    width: 143px;
    height: 34px;
    background: #2f2f2f;
    border: 2px solid #000;
    border-right: 0;
    line-height: 28px;
    padding: 0 0 2px 9px;
    display: flex;
    align-items: center;
    white-space: nowrap;
}

.with-icon {
    padding-left: 5px;
    gap: 5px;
    letter-spacing: -0.4px;
}

.second .value {
    width: 141px;
}

.arrow {
    width: 36px;
    height: 38px;
    flex: none;
    border: 2px solid #111;
    background: linear-gradient(#5c5c5c, #3d3d3d);
    display: flex;
    align-items: center;
    justify-content: center;
}

.arrow::after {
    content: "";
    border: 8px solid transparent;
    border-top: 8px solid #0c0c0c;
    border-bottom: 0;
}

.right .value {
    width: 108px;
}

.right .second .value {
    width: 110px;
}

.field {
    display: flex;
    align-items: center;
    height: 34px;
    margin-top: 4px;
    padding: 0 13px 0 7px;
}

.field.first {
    margin-top: 9px;
}

.field label {
    flex: 1;
    line-height: 30px;
    padding-bottom: 1px;
}

.input {
    width: 46px;
    height: 34px;
    background: #2f2f2f;
    border: 2px solid #000;
    border-radius: 5px;
    line-height: 29px;
    padding-left: 7px;
}

.input.price {
    width: 136px;
    padding-left: 10px;
    border-right: 0;
    border-radius: 5px 0 0 5px;
}

.check {
    width: 23px;
    height: 23px;
    margin-left: 4px;
    border: 2px solid #2a2c2a;
    border-radius: 4px;
    background: #565855;
}

.panel.right .field {
    padding-right: 14px;
}

.strip {
    height: 28px;
    margin: 4px 7px 0;
    border: 2px solid #33333a;
    border-bottom: 1px dotted #666;
    border-radius: 8px 8px 0 0;
    background: linear-gradient(#545768, #323447);
    font-weight: bold;
    font-size: 19px;
    letter-spacing: -0.1px;
    line-height: 24px;
    text-align: center;
    color: #c0be9e;
    text-shadow: 1px 2px 0 #000;
}

.strip.more {
    margin-top: 6px;
    margin-left: 6px;
}

.strip.adjust-open {
    margin: 4px 7px 0 6px;
    background: linear-gradient(#343649, #505364);
    border-bottom-color: #222;
    color: #8c8c84;
}

.adjust-body {
    display: flex;
    align-items: center;
    height: 38px;
    margin: 0 7px 0 6px;
    padding: 0 14px 0 7px;
    border: 2px solid #33322a;
    border-top: 0;
    background: #505364;
}

.adjust-body label {
    flex: 1;
}

.adjust-body .input {
    width: 47px;
    height: 35px;
}

.check.faint {
    background: transparent;
    border-color: #484b60;
}

.operator {
    height: 56px;
    border: 2px solid #000;
    border-radius: 6px;
    background: #2f2f2f;
    display: flex;
    align-items: center;
    justify-content: space-between;
    padding: 0 7px 2px 30px;
    font-size: 31px;
}

.change-status {
    height: 47px;
    margin: 19px 3px 0;
    border: 2px solid #332f22;
    border-top: 0;
    background: #435552;
    display: flex;
    align-items: center;
    padding-left: 10px;
    color: #98a9a6;
    letter-spacing: -0.35px;
}

.change-status label {
    width: 215px;
    padding-bottom: 2px;
}

.white-check {
    width: 24px;
    height: 25px;
    border: 2px solid #8d9492;
    border-radius: 4px;
    background: #fff;
}

.status-input {
    width: 94px;
    height: 34px;
    margin-left: 15px;
    border: 2px solid #000;
    border-radius: 5px;
    background: #60625f;
}

.actions {
    display: flex;
    gap: 68px;
    padding: 9px 0 0 36px;
}

.actions button {
    width: 282px;
    height: 34px;
    border: 2px solid #111;
    border-radius: 9px;
    background: linear-gradient(#525252, #333);
    font-size: 23px;
    letter-spacing: -0.6px;
    line-height: 28px;
    color: #3a3;
}

.actions .delete {
    width: 258px;
    color: #c00;
}

.side-tab {
    position: absolute;
    left: 1217px;
    top: 76px;
    width: 32px;
    height: 121px;
    border: 2px solid #1b1b1b;
    border-radius: 0 10px 10px 0;
    background: #505364;
    box-shadow: 0 0 18px rgba(0, 0, 0, 0.6);
}

.side-tab span {
    writing-mode: vertical-rl;
    font-size: 22px;
    letter-spacing: 0.4px;
    line-height: 29px;
    margin-top: 15px;
    color: #c0c0c0;
}

.wrench {
    position: absolute;
    left: 1224px;
    top: 4px;
    width: 90px;
    height: 91px;
    border: 3px solid #222;
    border-radius: 12px;
    background: linear-gradient(#707070, #9a9a9a);
    box-shadow: inset 0 0 0 2px #aaa;
    overflow: hidden;
}

.page-scroll {
    width: 34px;
    height: 569px;
    margin-left: auto;
    padding-top: 34px;
    background: linear-gradient(90deg, #3b3b3b, #555 50%, #3a3a3a 90%, #2b2b2b);
}

.page-thumb {
    height: 535px;
    background: linear-gradient(90deg, #5b5b5b, #858585 50%, #666 75%, #3a3a3a 95%);
}

/* ---------- downloads shelf ---------- */
.downloads {
    height: 103px;
    background: #fff;
    border-top: 2px solid #d9d9d9;
    display: flex;
    align-items: center;
}

.download {
    width: 438.7px;
    height: 80px;
    border-right: 2px solid #ccd0d4;
    display: flex;
    align-items: center;
    padding: 0 33px 0 31px;
    font-size: 23px;
    letter-spacing: -0.3px;
    color: #3c4043;
}

.download:first-child {
    width: 446px;
    padding-left: 39px;
}

.download span {
    flex: 1;
    margin-left: 25px;
}

.download.dl-long {
    letter-spacing: 0;
}

.show-all {
    width: 145px;
    height: 58px;
    margin: 0 24px 2px auto;
    border: 2px solid #dfe1e5;
    border-radius: 6px;
    background: #fff;
    color: #1a6fe0;
    font-size: 22px;
    letter-spacing: -0.2px;
    padding-bottom: 3px;
}

.close-shelf {
    margin-right: 24px;
}

/* ---------- taskbar ---------- */
.taskbar {
    width: 117px;
    border: 2px solid #4c5c63;
    border-bottom: 0;
    background: #64caf0;
    display: flex;
    flex-direction: column;
}

.cell {
    display: flex;
    align-items: center;
    justify-content: center;
    flex: none;
}

.start { height: 70px; padding: 0 2px 2px 0; }
.server { height: 94px; padding-top: 3px; }
.shell { height: 92px; padding-bottom: 2px; }

.active {
    height: 87px;
    border-top: 2px solid #44869e;
    border-bottom: 2px solid #44869e;
    background: #74d2ef;
}

.current {
    background: #9ee0f8;
    margin: 3px 0 5px;
}

.mt-text {
    font: bold 9px "Liberation Sans", sans-serif;
}

.mt-five {
    font: bold 12px "Liberation Sans", sans-serif;
    fill: #e8b820;
}

.tray {
    margin-top: auto;
    display: flex;
    flex-direction: column;
    align-items: center;
    color: #0c1c22;
    font-size: 22px;
    padding-bottom: 15px;
}

.tray svg {
    margin-right: 12px;
}

.lang {
    letter-spacing: -1.3px;
    line-height: 30px;
    margin-top: 24px;
    margin-right: 2px;
}

.time {
    letter-spacing: -0.7px;
    line-height: 32px;
    margin-top: 20px;
}

.date {
    letter-spacing: -0.8px;
    line-height: 32px;
}
```
